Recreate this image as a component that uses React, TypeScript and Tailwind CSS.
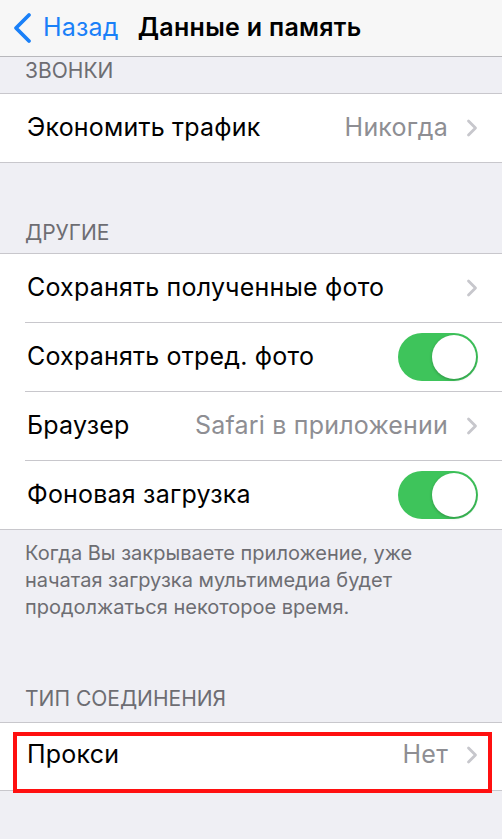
import React from "react";

const font = { fontFamily: "Inter, 'Noto Sans', sans-serif" };

function Chevron() {
  return (
    <svg width="12" height="18" viewBox="0 0 12 18" className="shrink-0">
      <path d="M2.5 2l7 7-7 7" fill="none" stroke="#c7c7cc" strokeWidth="2.8" strokeLinecap="round" strokeLinejoin="round" />
    </svg>
  );
}

function Toggle() {
  return (
    <div className="w-[80px] h-[48px] rounded-full bg-[#3ec45b] flex items-center justify-end pr-[2px] shrink-0">
      <div className="w-[44px] h-[44px] rounded-full bg-white shadow-[0_1px_3px_rgba(0,0,0,0.25)]" />
    </div>
  );
}

function Row({ label, value, toggle, last }: { label: string; value?: string; toggle?: boolean; last?: boolean }) {
  return (
    <div className="pl-[25px]">
      <div className={`${last ? "h-[68px]" : "h-[69px] border-b border-[#c8c7cc]"} flex items-center pr-[24px]`}>
        <span className="pl-[2px] text-[25px] text-black flex-1 truncate tracking-[0.2px]">{label}</span>
        {value && <span className="text-[25px] text-[#8e8e93] mr-[18px] tracking-[0.2px]">{value}</span>}
        {toggle ? <Toggle /> : <Chevron />}
      </div>
    </div>
  );
}

export default function App() {
  return (
    <div className="w-[502px] h-[839px] bg-[#efeff4] overflow-hidden" style={font}>
      <div className="h-[57px] bg-[#f7f7f7] border-b border-[#b8b8bc] flex items-center">
        <div className="flex items-center pl-[12px]">
          <svg width="20" height="32" viewBox="0 0 20 32">
            <path d="M17 3L4 16l13 13" fill="none" stroke="#1a80f8" strokeWidth="3.8" strokeLinecap="round" strokeLinejoin="round" />
          </svg>
          <span className="ml-[11px] text-[25px] tracking-[0.2px] text-[#1a80f8]">Назад</span>
        </div>
        <span className="ml-[19px] text-[25px] font-semibold text-black tracking-[0.3px]">Данные и память</span>
      </div>

      <div className="h-[37px] flex items-end pb-[10px] pl-[25px] text-[21px] leading-[25px] text-[#6d6d72] border-b border-[#c8c7cc]">
        ЗВОНКИ
      </div>
      <div className="bg-white border-b border-[#c8c7cc]">
        <Row label="Экономить трафик" value="Никогда" last />
      </div>

      <div className="h-[91px] flex items-end pb-[8px] pl-[25px] text-[21px] leading-[25px] text-[#6d6d72] border-b border-[#c8c7cc]">
        ДРУГИЕ
      </div>
      <div className="bg-white border-b border-[#c8c7cc]">
        <Row label="Сохранять полученные фото" />
        <Row label="Сохранять отред. фото" toggle />
        <Row label="Браузер" value="Safari в приложении" />
        <Row label="Фоновая загрузка" toggle last />
      </div>

      <div className="pt-[10px] pl-[25px] pr-[20px] text-[20px] leading-[27px] text-[#6d6d72]">
        Когда Вы закрываете приложение, уже начатая загрузка мультимедиа будет продолжаться некоторое время.
      </div>

      <div className="h-[102px] flex items-end pb-[11px] pl-[25px] text-[21px] leading-[25px] text-[#6d6d72] border-b border-[#c8c7cc]">
        ТИП СОЕДИНЕНИЯ
      </div>
      <div className="bg-white border-b border-[#c8c7cc] relative">
        <div className="pl-[25px]">
          <div className="h-[67px] flex items-center pr-[24px] pb-[3px]">
            <span className="pl-[2px] text-[25px] text-black flex-1 tracking-[0.2px]">Прокси</span>
            <span className="text-[25px] text-[#8e8e93] mr-[18px] tracking-[0.2px]">Нет</span>
            <Chevron />
          </div>
        </div>
        <div className="absolute left-[13px] right-[10px] top-[9px] bottom-[-3px] border-[4px] border-[#ff1010]" />
      </div>
    </div>
  );
}
